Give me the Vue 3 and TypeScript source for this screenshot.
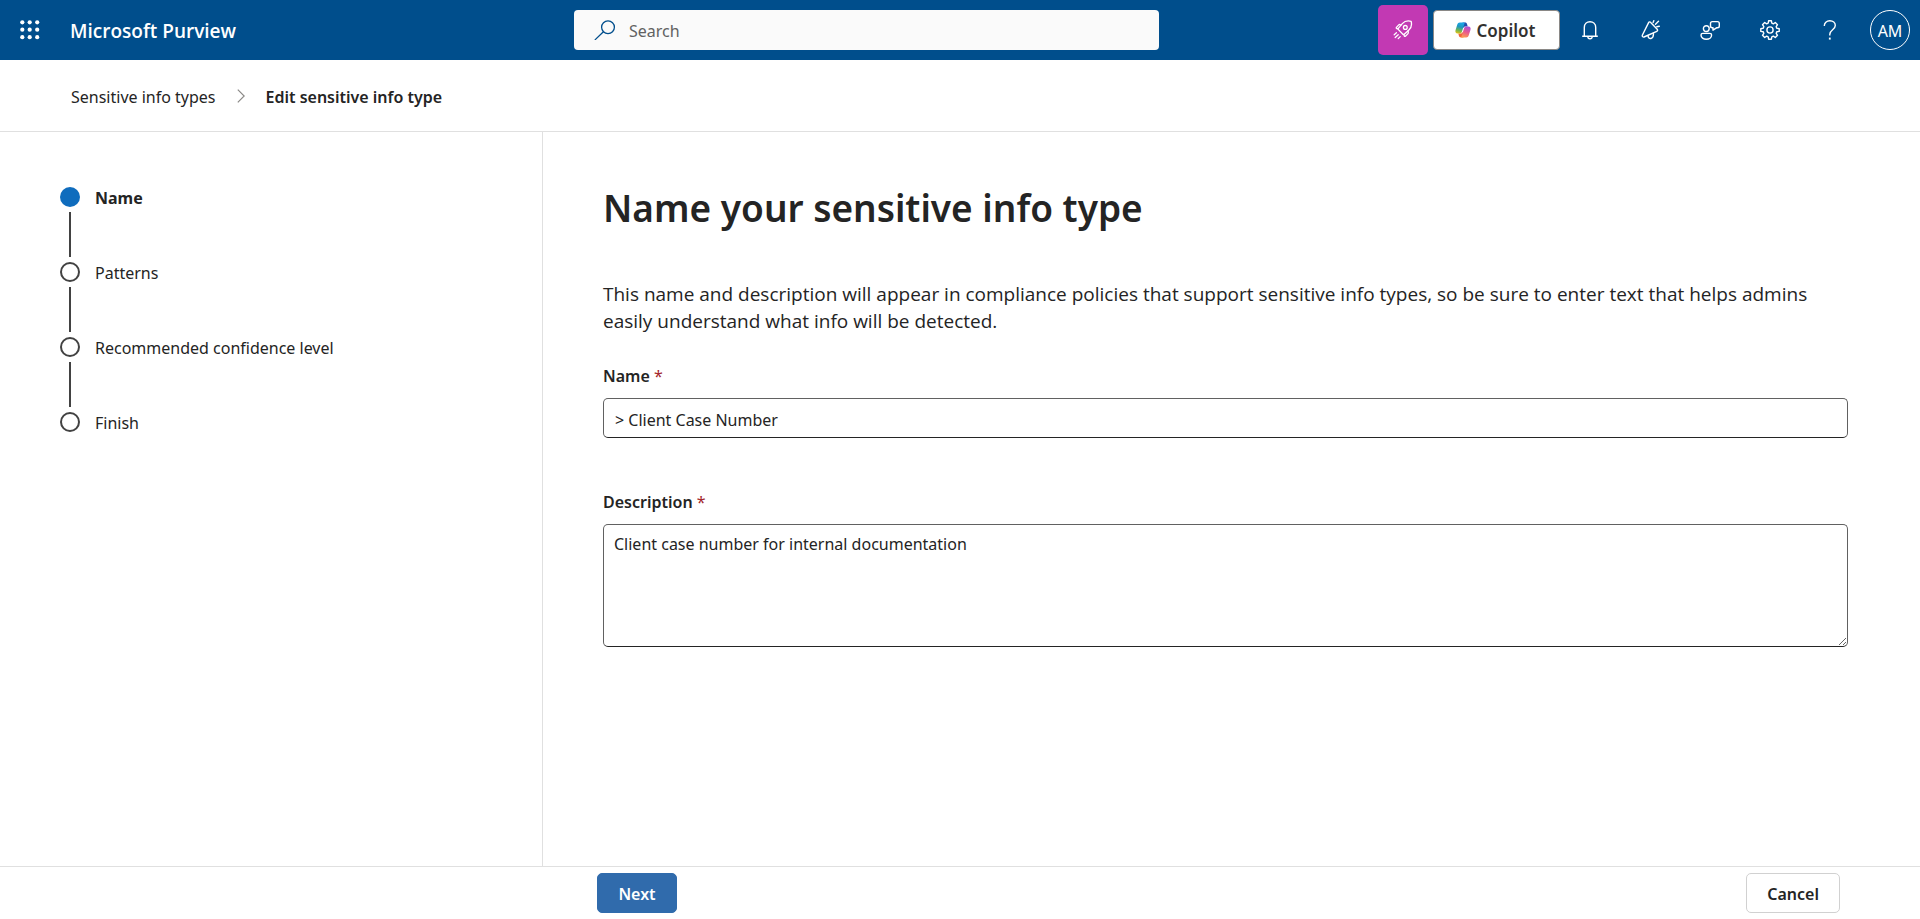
<script setup lang="ts">
import { ref } from 'vue'

interface Step {
  id: string
  label: string
}

const steps: Step[] = [
  { id: 'name', label: 'Name' },
  { id: 'patterns', label: 'Patterns' },
  { id: 'confidence', label: 'Recommended confidence level' },
  { id: 'finish', label: 'Finish' },
]

const currentStep = ref('name')
const query = ref('')
const name = ref('> Client Case Number')
const description = ref('Client case number for internal documentation')
</script>

<template>
  <div class="page">
    <header class="topbar">
      <div class="brand-area">
        <button class="waffle" type="button" aria-label="App launcher">
          <svg width="20" height="20" viewBox="0 0 20 20" fill="currentColor">
            <circle cx="2.3" cy="2.3" r="2.1" /><circle cx="9.7" cy="2.3" r="2.1" /><circle cx="17.2" cy="2.3" r="2.1" />
            <circle cx="2.3" cy="9.7" r="2.1" /><circle cx="9.7" cy="9.7" r="2.1" /><circle cx="17.2" cy="9.7" r="2.1" />
            <circle cx="2.3" cy="17.2" r="2.1" /><circle cx="9.7" cy="17.2" r="2.1" /><circle cx="17.2" cy="17.2" r="2.1" />
          </svg>
        </button>
        <a class="brand" href="#">Microsoft Purview</a>
      </div>

      <label class="search">
        <svg width="22" height="20" viewBox="0 0 22 20" fill="none" stroke="#004e8c" stroke-width="1.3">
          <circle cx="14" cy="7.2" r="6.4" />
          <path d="M9.4 11.8 1.2 19.6" stroke-linecap="round" />
        </svg>
        <input v-model="query" type="search" placeholder="Search" aria-label="Search" />
      </label>

      <div class="actions">
        <button class="rocket" type="button" aria-label="What's new">
          <svg width="20" height="20" viewBox="0 0 20 20" fill="none" stroke="currentColor" stroke-width="1.3" stroke-linecap="round" stroke-linejoin="round">
            <path d="M5.4 9.6C5 9.2 5 8.7 5.3 8.3L9.3 3.6C11.7 1 15.2.6 18.1 1.300 18.900 4.100 18.300 7.900 15.700 10.300L11.200 14.300C10.800 14.600 10.300 14.600 9.900 14.200Z" />
            <circle cx="12.3" cy="7.4" r="1.900" />
            <path d="M8.200 4.900 7.100 4.600C6.500 4.400 6 4.600 5.500 5.100L3.400 7.400C3 7.900 3.200 8.400 3.700 8.500L5 8.800M15 11 15.300 12.200C15.400 12.800 15.300 13.400 14.800 13.900L12.400 16.200C11.900 16.600 11.400 16.400 11.300 15.900L11 14.600" />
            <path d="M3.400 12.800 1.200 14.800M5.200 14.800 2.200 17.600M7.200 16.600 5.200 18.600" />
          </svg>
        </button>

        <button class="copilot" type="button">
          <svg width="16" height="16" viewBox="0 0 16 16" fill="none">
            <defs>
              <linearGradient id="cp-left" x1="6" y1="0" x2="3" y2="12" gradientUnits="userSpaceOnUse">
                <stop offset="0" stop-color="#1ba8ee" /><stop offset=".4" stop-color="#1f97c0" />
                <stop offset=".7" stop-color="#6fb552" /><stop offset="1" stop-color="#f4c20d" />
              </linearGradient>
              <linearGradient id="cp-right" x1="13" y1="4" x2="9" y2="16" gradientUnits="userSpaceOnUse">
                <stop offset="0" stop-color="#a64de0" /><stop offset=".5" stop-color="#e8588f" /><stop offset="1" stop-color="#ffa24b" />
              </linearGradient>
            </defs>
            <path fill="#1f4fae" d="M7.500.5H10C11.200.5 11.800 1.100 12.100 2.200L12.700 4.500H10.500C9.500 4.500 9 5 8.700 5.800L7.500 5Z" />
            <path fill="#f2653a" transform="rotate(180 8 8)" d="M7.500.5H10C11.200.5 11.800 1.100 12.100 2.200L12.700 4.500H10.500C9.500 4.500 9 5 8.700 5.800L7.500 5Z" />
            <path fill="url(#cp-left)" d="M4.800.5H9.800L7 9.500C6.500 11 5.800 11.500 4.600 11.500H2.600C.8 11.500 0 10 .5 8.300L2.300 2.500C2.700 1.200 3.500.5 4.800.5Z" />
            <path fill="url(#cp-right)" d="M11.200 15.500H6.200L9 6.500C9.500 5 10.200 4.500 11.400 4.500H13.400C15.200 4.500 16 6 15.500 7.700L13.700 13.500C13.300 14.800 12.500 15.500 11.200 15.500Z" />
          </svg>
          <span>Copilot</span>
        </button>

        <button class="icon-btn" type="button" aria-label="Notifications">
          <svg width="20" height="20" viewBox="0 0 20 20" fill="none" stroke="currentColor" stroke-width="1.4">
            <path d="M2.200 16.200H17.800M4.300 16V7.400C4.300 4 6.800 1.700 10 1.700S15.700 4 15.700 7.400V16M7.800 16.400C7.900 19.500 12.100 19.500 12.200 16.400" />
          </svg>
        </button>
        <button class="icon-btn" type="button" aria-label="Announcements">
          <svg width="20" height="20" viewBox="0 0 20 20" fill="none" stroke="currentColor" stroke-width="1.4" stroke-linecap="round" stroke-linejoin="round">
            <path d="M8.600 2.600C9 1.800 10 1.600 10.700 2.400L17.200 9.200C17.900 10 17.700 10.900 16.800 11.300L4 17C3 17.400 1.900 16.200 2.300 15.200Z" />
            <path d="M8 15.600C8 20 14 19.600 13.400 13.200M13.100 2.400 13.800.7M15.500 4.200 18.500 1.200M16.800 6.700 19.300 6.300" />
          </svg>
        </button>
        <button class="icon-btn" type="button" aria-label="Feedback">
          <svg width="20" height="20" viewBox="0 0 20 20" fill="none" stroke="currentColor" stroke-width="1.4" stroke-linejoin="round">
            <circle cx="6.300" cy="8.600" r="2.900" />
            <path d="M2.800 13.400H9.800C10.900 13.400 11.600 14.100 11.600 15 11.600 17.600 9.200 19.200 6.300 19.200S1 17.600 1 15C1 14.100 1.700 13.400 2.800 13.400Z" />
            <path d="M12.300 1.600H17.500C18.600 1.600 19.300 2.300 19.300 3.400V6C19.300 7.100 18.600 7.800 17.500 7.800H16.500L13 10.200V7.800H12.300C11.200 7.800 10.500 7.100 10.500 6V3.400C10.500 2.300 11.200 1.600 12.300 1.600Z" />
          </svg>
        </button>
        <button class="icon-btn" type="button" aria-label="Settings">
          <svg width="20" height="20" viewBox="0 0 20 20" fill="none" stroke="currentColor" stroke-width="1.4" stroke-linejoin="round">
            <circle cx="10" cy="10" r="3.100" />
            <path d="M8.600 .8H11.400L11.800 3.200 13.300 3.800 15.300 2.500 17.500 4.700 16.200 6.700 16.800 8.200 19.200 8.600V11.400L16.800 11.800 16.200 13.300 17.500 15.300 15.300 17.500 13.300 16.200 11.800 16.800 11.400 19.200H8.600L8.200 16.800 6.700 16.200 4.700 17.500 2.500 15.300 3.800 13.300 3.200 11.800 .8 11.400V8.600L3.200 8.200 3.800 6.700 2.500 4.700 4.700 2.500 6.700 3.800 8.200 3.200Z" />
          </svg>
        </button>
        <button class="icon-btn" type="button" aria-label="Help">
          <svg width="20" height="20" viewBox="0 0 20 20" fill="none" stroke="currentColor" stroke-width="1.4">
            <path d="M4.300 5.900C4.300 2.700 6.600.8 9.800.8S15.300 2.800 15.300 5.500C15.300 9.600 9.800 9.800 9.800 14.200V15.400" />
            <path d="M9.800 17.600V19.600" stroke-width="1.8" />
          </svg>
        </button>
        <div class="account">
          <button class="avatar" type="button" aria-label="Account manager for AM">AM</button>
        </div>
      </div>
    </header>

    <nav class="breadcrumb" aria-label="Breadcrumb">
      <a href="#">Sensitive info types</a>
      <svg width="8" height="14" viewBox="0 0 8 14" fill="none" stroke="#8a8886" stroke-width="1.2">
        <path d="M.8.600 7.200 7 .8 13.400" />
      </svg>
      <strong aria-current="page">Edit sensitive info type</strong>
    </nav>

    <div class="body">
      <aside class="sidebar">
        <ol class="steps">
          <li v-for="s in steps" :key="s.id" class="step" :class="{ current: s.id === currentStep }">
            <span class="rail"><span class="dot"></span><span class="line"></span></span>
            <span class="step-label">{{ s.label }}</span>
          </li>
        </ol>
      </aside>

      <main class="content">
        <h1>Name your sensitive info type</h1>
        <p class="intro">
          This name and description will appear in compliance policies that support sensitive info types, so be sure to
          enter text that helps admins easily understand what info will be detected.
        </p>
        <form class="form" @submit.prevent>
          <div class="field">
            <label for="sit-name">Name <span class="required">*</span></label>
            <input id="sit-name" v-model="name" type="text" required />
          </div>
          <div class="field">
            <label for="sit-description">Description <span class="required">*</span></label>
            <textarea id="sit-description" v-model="description" required></textarea>
          </div>
        </form>
      </main>
    </div>

    <footer class="footer">
      <button class="btn primary" type="button">Next</button>
      <button class="btn" type="button">Cancel</button>
    </footer>
  </div>
</template>

<style>
body {
  margin: 0;
  background: #fff;
}
</style>

<style scoped>
.page {
  display: flex;
  flex-direction: column;
  min-height: 100vh;
  font-family: "Segoe UI", "Noto Sans", "Open Sans", sans-serif;
  font-size: 16px;
  line-height: 24px;
  color: #242424;
}
.page *,
.page {
  box-sizing: border-box;
}
button,
input,
textarea {
  font: inherit;
  color: inherit;
}
button {
  padding: 0;
  border: 0;
  background: none;
  cursor: pointer;
}
svg {
  display: block;
  flex: none;
}

/* Top bar */
.topbar {
  display: grid;
  grid-template-columns: minmax(260px, 574fr) minmax(160px, 585fr) minmax(550px, 761fr);
  align-items: center;
  height: 60px;
  background: #004e8c;
  color: #fff;
}
.brand-area {
  display: flex;
  align-items: center;
}
.waffle {
  display: grid;
  place-items: center;
  width: 60px;
  height: 60px;
}
.brand {
  padding: 2px 0 0 10px;
  font-family: "Segoe UI", "Open Sans", sans-serif;
  font-size: 19px;
  font-weight: 600;
  color: inherit;
  text-decoration: none;
}
.search {
  display: flex;
  align-items: center;
  gap: 13px;
  height: 40px;
  padding: 0 20px;
  border-radius: 4px;
  background: #fafafa;
}
.search input {
  flex: 1;
  min-width: 0;
  padding: 2px 0 0;
  border: 0;
  outline: 0;
  background: none;
  color: #242424;
}
.search input::placeholder {
  color: #616161;
  opacity: 1;
}
.actions {
  display: flex;
  align-items: center;
  justify-content: flex-end;
}
.rocket {
  display: grid;
  place-items: center;
  width: 50px;
  height: 50px;
  margin-right: 5px;
  border-radius: 5px;
  background: #c239b3;
}
.copilot {
  display: flex;
  align-items: center;
  justify-content: center;
  gap: 6px;
  width: 127px;
  height: 40px;
  padding-right: 3px;
  border: 1px solid #8a8886;
  border-radius: 4px;
  background: #fff;
  font-size: 17px;
  font-weight: 600;
  color: #323130;
}
.copilot span {
  padding-top: 2px;
}
.icon-btn,
.account {
  display: grid;
  place-items: center;
  width: 60px;
  height: 60px;
}
.avatar {
  width: 40px;
  height: 40px;
  padding-top: 2px;
  border: 1px solid #fff;
  border-radius: 50%;
}

/* Breadcrumb */
.breadcrumb {
  display: flex;
  align-items: center;
  gap: 21px;
  height: 72px;
  padding: 0 71px;
  border-bottom: 1px solid #e0e0e0;
}
.breadcrumb a,
.breadcrumb strong {
  padding-top: 2px;
}
.breadcrumb a {
  color: inherit;
  text-decoration: none;
}
.breadcrumb strong {
  font-weight: 600;
}

/* Wizard */
.body {
  display: flex;
  flex: 1;
}
.sidebar {
  flex: none;
  width: 543px;
  padding: 55px 60px;
  border-right: 1px solid #e0e0e0;
}
.steps {
  margin: 0;
  padding: 0;
  list-style: none;
}
.step {
  display: flex;
  gap: 15px;
}
.rail {
  display: flex;
  flex-direction: column;
  align-items: center;
  gap: 5px;
  padding-bottom: 5px;
}
.dot {
  width: 20px;
  height: 20px;
  border: 2px solid #424242;
  border-radius: 50%;
}
.line {
  width: 2px;
  height: 45px;
  background: #424242;
}
.step:last-child .line {
  display: none;
}
.step-label {
  line-height: 22px;
}
.current .dot {
  border: 0;
  background: #0f6cbd;
}
.current .step-label {
  font-weight: 700;
}

.content {
  flex: 1;
  min-width: 0;
  padding: 51px 72px 48px 60px;
}
h1 {
  margin: 0;
  font-size: 37px;
  font-weight: 600;
  line-height: 50px;
}
.intro {
  margin: 48px 0 0;
  font-family: "Segoe UI", "Open Sans", sans-serif;
  font-size: 19px;
  line-height: 27px;
}
.form {
  display: flex;
  flex-direction: column;
  gap: 52px;
  margin-top: 29px;
}
.field {
  display: flex;
  flex-direction: column;
  gap: 10px;
}
.field label {
  font-weight: 600;
}
.required {
  font-weight: 400;
  color: #a4262c;
}
.field input,
.field textarea {
  display: block;
  width: 100%;
  border: 1px solid #616161;
  border-bottom-color: #242424;
  border-radius: 5px;
  background: #fff;
  outline: 0;
}
.field input {
  height: 40px;
  padding: 3px 11px 0;
}
.field textarea {
  height: 123px;
  padding: 7px 10px;
  resize: vertical;
}

/* Footer */
.footer {
  display: flex;
  align-items: center;
  justify-content: space-between;
  height: 53px;
  padding: 0 80px 0 597px;
  border-top: 1px solid #e0e0e0;
}
.btn {
  min-width: 80px;
  height: 40px;
  padding: 2px 20px 0;
  border: 1px solid #d1d1d1;
  border-radius: 5px;
  background: #fff;
  font-weight: 600;
}
.btn.primary {
  border-color: #306bac;
  background: #306bac;
  color: #fff;
}
</style>
